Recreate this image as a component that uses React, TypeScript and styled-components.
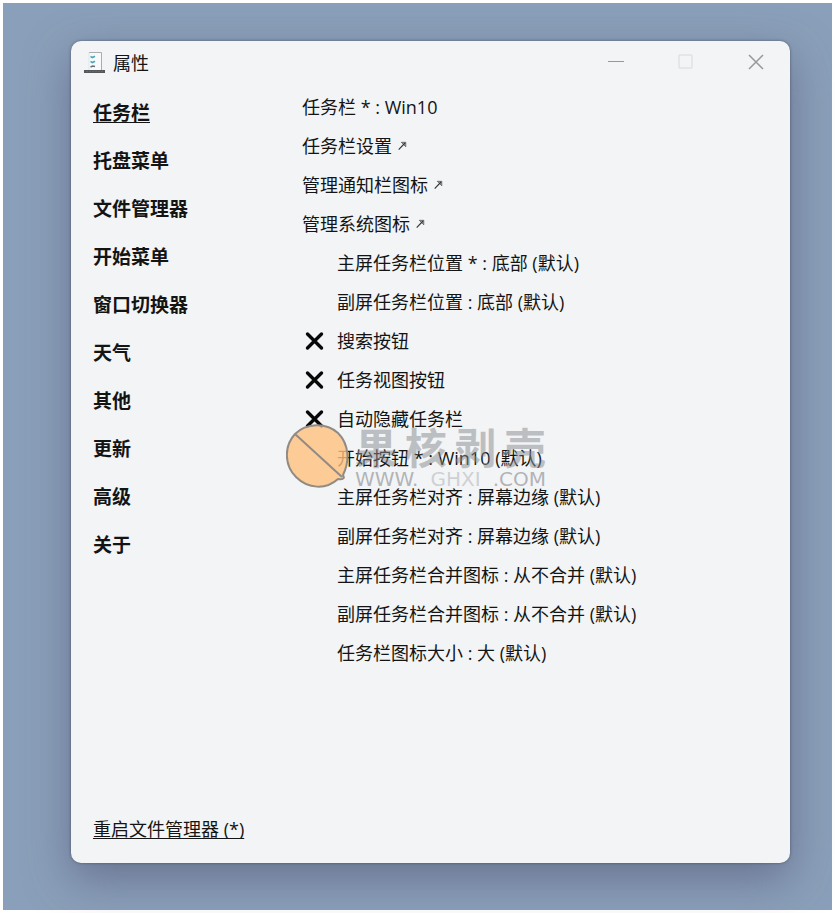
import React, { useState } from "react";
import styled, { createGlobalStyle, css } from "styled-components";

const GlobalStyle = createGlobalStyle`
  * { box-sizing: border-box; }
  body {
    margin: 0;
    background: #ffffff;
    color: #141414;
    font-family: "Open Sans", "Noto Sans CJK SC", sans-serif;
    font-size: 18px;
  }
`;

const Desktop = styled.div`
  min-height: 100vh;
  display: flex;
  padding: 38px 42px 47px 68px;
  border: 3px solid #ffffff;
  background: #8a9fb9;
`;

const Window = styled.main`
  flex: 1;
  min-width: 0;
  display: flex;
  flex-direction: column;
  border-radius: 10px;
  background: #f2f4f6;
  box-shadow: 0 0 3px rgba(60, 66, 80, 0.7), 0 16px 44px rgba(88, 92, 124, 0.65);
`;

const TitleBar = styled.header`
  display: flex;
  align-items: center;
  height: 44px;
  padding: 0 20px 0 13px;
`;

const Title = styled.h1`
  flex: 1;
  margin: 0 0 0 8px;
  font-size: 18px;
  font-weight: 400;
  line-height: 24px;
`;

const Controls = styled.div`
  display: flex;
  gap: 42px;
  height: 42px;
  align-self: flex-start;
  align-items: center;
`;

const plainButton = css`
  padding: 0;
  border: 0;
  background: none;
  color: inherit;
  font: inherit;
  cursor: pointer;
`;

const ControlButton = styled.button`
  ${plainButton}
  display: flex;
  align-items: center;
  justify-content: center;
  width: 28px;
  height: 28px;
  color: #96989b;

  &:disabled {
    color: #dfe1e3;
    cursor: default;
  }
`;

const Body = styled.div`
  flex: 1;
  display: grid;
  grid-template-columns: 209px 1fr;
  padding: 1px 22px 20px;
`;

const Sidebar = styled.div`
  display: flex;
  flex-direction: column;
  align-items: flex-start;
`;

const Nav = styled.nav`
  flex: 1;
  display: flex;
  flex-direction: column;
  align-items: flex-start;
  gap: 20px;
  padding-top: 13px;
`;

const NavLink = styled.a<{ $active: boolean }>`
  color: inherit;
  font-size: 19px;
  font-weight: 700;
  line-height: 28px;
  text-decoration: ${(p) => (p.$active ? "underline" : "none")};
  text-decoration-thickness: 1px;
  text-decoration-skip-ink: none;
  text-underline-offset: 2px;
`;

const RestartButton = styled.button`
  ${plainButton}
  line-height: 28px;
  text-decoration: underline;
  text-decoration-thickness: 1px;
  text-decoration-skip-ink: none;
  text-underline-offset: 2px;
`;

const Settings = styled.section`
  position: relative;
  display: flex;
  flex-direction: column;
  align-items: flex-start;
`;

const SettingButton = styled.button<{ $indent?: boolean }>`
  ${plainButton}
  display: flex;
  align-items: center;
  gap: 6px;
  height: 39px;
  padding-left: ${(p) => (p.$indent ? "35px" : "0")};
  white-space: nowrap;
`;

const Toggle = styled.label`
  position: relative;
  display: flex;
  align-items: center;
  gap: 11px;
  height: 39px;
  padding-left: 2px;
  cursor: pointer;
`;

const ToggleInput = styled.input`
  position: absolute;
  margin: 0;
  width: 22px;
  height: 22px;
  opacity: 0;
`;

const Watermark = styled.div`
  position: absolute;
  left: -16px;
  top: 338px;
  display: flex;
  align-items: flex-start;
  pointer-events: none;
`;

const Brand = styled.div`
  width: 191px;
  margin-left: 5px;
`;

const BrandName = styled.div`
  display: flex;
  justify-content: space-between;
  color: rgba(135, 138, 142, 0.5);
  font-family: "Noto Sans CJK SC", sans-serif;
  font-size: 42px;
  font-weight: 700;
  line-height: 44px;
`;

const BrandSite = styled.div`
  display: flex;
  justify-content: space-between;
  color: rgba(140, 143, 146, 0.65);
  font-family: "DejaVu Sans", sans-serif;
  font-size: 20px;
  line-height: 22px;
`;

const BrandAccent = styled.span`
  color: rgba(175, 178, 182, 0.55);
`;

const AppIcon = () => (
  <svg width="21" height="22" viewBox="0 0 21 22" aria-hidden="true">
    <path d="M5 .5h12.5V18H5z" fill="#f7f9fa" />
    <path d="M5 .5h12.5V18" fill="none" stroke="#a8adb1" />
    <path d="M5 .5V18" stroke="#e3e6e8" />
    <path d="M6.500 4.500l2 1L11 4.200M6.500 9.500l2 1 2.500-1.300" fill="none" stroke="#49a9b8" strokeWidth="1.600" />
    <path d="M6.500 15l2.200-1 2.300.6" fill="none" stroke="#65717a" strokeWidth="1.500" />
    <path d="M0 18h21v3H0z" fill="#55585b" />
    <path d="M2 19.500h17" stroke="#66696c" strokeDasharray="2 1" />
  </svg>
);

const Cross = () => (
  <svg width="22" height="22" viewBox="0 0 22 22" aria-hidden="true">
    <path d="M3.500 5l14 14M17.500 5l-14 14" stroke="#080808" strokeWidth="3.400" strokeLinecap="round" />
  </svg>
);

const ExternalArrow = () => (
  <svg width="9" height="12" viewBox="0 0 9 12" aria-hidden="true">
    <path d="M.7 10.700L7 4" fill="none" stroke="#333" strokeWidth="1.100" />
    <path d="M3.300 3.300h4.500v4.500z" fill="#333" fillOpacity=".35" stroke="#333" strokeWidth=".6" />
  </svg>
);

const Nutshell = () => (
  <svg width="64" height="64" viewBox="0 0 64 64" aria-hidden="true">
    <path
      d="M9 10C20-1 40-2 52 9c11 11 12 28 5 42 2 3 0 5-5 4C40 66 22 65 10 53-2 41-2 22 9 10z"
      fill="#ffc07e"
      fillOpacity=".8"
    />
    <path
      d="M9 10C20-1 40-2 52 9c11 11 12 28 5 42 2 3 0 5-5 4C40 66 22 65 10 53-2 41-2 22 9 10zM9 10l47 43"
      fill="none"
      stroke="#928b84"
      strokeWidth="2"
      strokeLinejoin="round"
    />
  </svg>
);

const sections = ["任务栏", "托盘菜单", "文件管理器", "开始菜单", "窗口切换器", "天气", "其他", "更新", "高级", "关于"];
const links = ["任务栏设置", "管理通知栏图标", "管理系统图标"];
const positions = ["主屏任务栏位置 * : 底部 (默认)", "副屏任务栏位置 : 底部 (默认)"];
const toggles = ["搜索按钮", "任务视图按钮", "自动隐藏任务栏"];
const options = [
  "开始按钮 * : Win10 (默认)",
  "主屏任务栏对齐 : 屏幕边缘 (默认)",
  "副屏任务栏对齐 : 屏幕边缘 (默认)",
  "主屏任务栏合并图标 : 从不合并 (默认)",
  "副屏任务栏合并图标 : 从不合并 (默认)",
  "任务栏图标大小 : 大 (默认)",
];

export default function App() {
  const [active, setActive] = useState(sections[0]);

  return (
    <>
      <GlobalStyle />
      <Desktop>
        <Window>
          <TitleBar>
            <AppIcon />
            <Title>属性</Title>
            <Controls>
              <ControlButton aria-label="最小化">
                <svg width="16" height="16" aria-hidden="true">
                  <path d="M0 7.500h16" stroke="currentColor" />
                </svg>
              </ControlButton>
              <ControlButton aria-label="最大化" disabled>
                <svg width="16" height="16" aria-hidden="true">
                  <rect x="1" y="1" width="13" height="13" rx="1" fill="none" stroke="currentColor" strokeWidth="1.500" />
                </svg>
              </ControlButton>
              <ControlButton aria-label="关闭">
                <svg width="16" height="16" aria-hidden="true">
                  <path d="M1 1l14 14M15 1L1 15" stroke="currentColor" strokeWidth="1.500" />
                </svg>
              </ControlButton>
            </Controls>
          </TitleBar>
          <Body>
            <Sidebar>
              <Nav>
                {sections.map((name) => (
                  <NavLink key={name} href="#" $active={name === active} onClick={() => setActive(name)}>
                    {name}
                  </NavLink>
                ))}
              </Nav>
              <RestartButton>重启文件管理器 (*)</RestartButton>
            </Sidebar>
            <Settings>
              <SettingButton>任务栏 * : Win10</SettingButton>
              {links.map((name) => (
                <SettingButton key={name}>
                  {name}
                  <ExternalArrow />
                </SettingButton>
              ))}
              {positions.map((name) => (
                <SettingButton key={name} $indent>
                  {name}
                </SettingButton>
              ))}
              {toggles.map((name) => (
                <Toggle key={name}>
                  <ToggleInput type="checkbox" />
                  <Cross />
                  {name}
                </Toggle>
              ))}
              {options.map((name) => (
                <SettingButton key={name} $indent>
                  {name}
                </SettingButton>
              ))}
              <Watermark>
                <Nutshell />
                <Brand>
                  <BrandName>
                    <span>果</span>
                    <span>核</span>
                    <span>剥</span>
                    <span>壳</span>
                  </BrandName>
                  <BrandSite>
                    <span>WWW.</span>
                    <BrandAccent>GHXI</BrandAccent>
                    <span>.COM</span>
                  </BrandSite>
                </Brand>
              </Watermark>
            </Settings>
          </Body>
        </Window>
      </Desktop>
    </>
  );
}
